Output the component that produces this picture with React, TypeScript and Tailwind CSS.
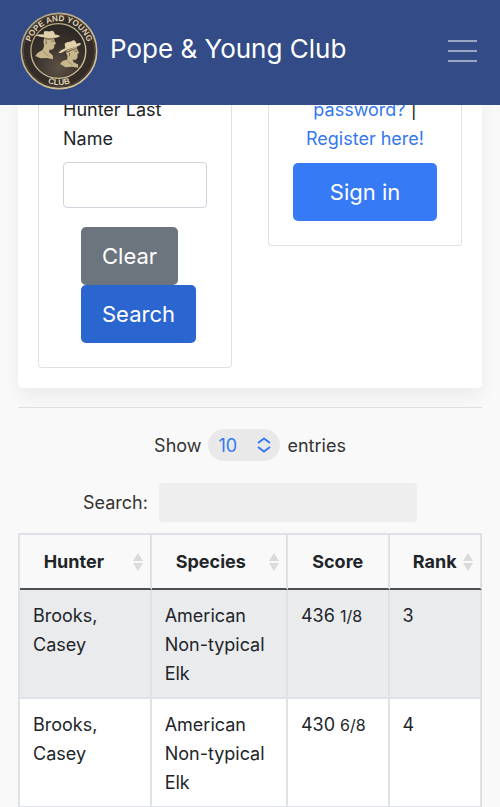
import type { ReactNode } from "react";

const records = [
  { hunter: "Brooks, Casey", species: "American Non-typical Elk", score: 436, fraction: "1/8", rank: 3 },
  { hunter: "Brooks, Casey", species: "American Non-typical Elk", score: 430, fraction: "6/8", rank: 4 },
];

const ClubLogo = () => (
  <svg viewBox="58 35 236 236" className="size-[78px] shrink-0" role="img" aria-label="Pope and Young Club medallion">
    <defs>
      <radialGradient id="field" cx="0.5" cy="0.8" r="0.8">
        <stop offset="0" stopColor="#5e5245" />
        <stop offset="0.5" stopColor="#3b332d" />
        <stop offset="1" stopColor="#2a2523" />
      </radialGradient>
      <linearGradient id="brass" x1="0" y1="0" x2="1" y2="1">
        <stop offset="0" stopColor="#a89b7c" />
        <stop offset="0.5" stopColor="#c9b98f" />
        <stop offset="1" stopColor="#d9c79a" />
      </linearGradient>
      <path id="arc-top" d="M 86 153 A 90 90 0 0 1 266 153" />
      <path id="arc-bottom" d="M 70 150 A 106 106 0 0 0 282 150" />
    </defs>
    <circle cx="176" cy="153" r="114" fill="#332c29" stroke="url(#brass)" strokeWidth="5" />
    <circle cx="176" cy="153" r="108" fill="none" stroke="#57493a" strokeWidth="3" />
    <circle cx="174" cy="153" r="83" fill="url(#field)" stroke="url(#brass)" strokeWidth="4" />
    <g fill="#e0d5b5" fontFamily="Liberation Sans, sans-serif" fontWeight="700" fontSize="25" textAnchor="middle">
      <text>
        <textPath href="#arc-top" startOffset="50%">POPE AND YOUNG</textPath>
      </text>
      <text>
        <textPath href="#arc-bottom" startOffset="50%">CLUB</textPath>
      </text>
    </g>
    {/* left hunter */}
    <path d="M132 110 L161 112 L162 121 L167 131 L162 134 L161 144 L154 149 L147 149 L146 157 L157 166 L158 178 L140 174 L120 175 L104 168 L112 158 L127 149 L131 138 L129 124 Z" fill="#c8b78d" />
    <path d="M105 106 Q116 101 130 103 L130 95 Q134 91 145 94 L157 92 Q162 95 164 103 Q174 103 180 108 Q165 116 142 113 Q120 111 105 106 Z" fill="#e0d1aa" />
    <path d="M131 113 Q145 117 161 114 L161 117 Q145 121 131 117 Z" fill="#7b6a4e" />
    <path d="M137 121 V133 M153 123 H160" fill="none" stroke="#7b6a4e" strokeWidth="3" />
    <path d="M128 154 L145 169" fill="none" stroke="#8a7859" strokeWidth="2" />
    {/* right hunter */}
    <path d="M199 151 L229 140 L232 149 L237 159 L232 162 L232 173 L226 180 L217 179 L220 187 L234 194 L234 204 L215 201 L196 202 L179 192 L187 183 L201 179 L202 168 L198 160 Z" fill="#c8b78d" />
    <path d="M174 158 Q180 150 195 145 L193 131 Q200 124 210 125 L221 120 Q227 123 229 131 Q240 127 243 131 Q238 139 219 143 Q200 147 187 157 Q180 161 174 158 Z" fill="#e0d1aa" />
    <path d="M200 154 Q214 148 229 144 L230 147 Q216 151 201 158 Z" fill="#7b6a4e" />
    <path d="M208 158 V169 M223 154 H231" fill="none" stroke="#7b6a4e" strokeWidth="3" />
    <path d="M201 183 L217 195" fill="none" stroke="#8a7859" strokeWidth="2" />
  </svg>
);

const SortArrows = () => (
  <svg viewBox="0 0 10 18" className="absolute right-[7px] top-1/2 h-[18px] w-[10px] -translate-y-1/2 fill-[#dadada]" aria-hidden="true">
    <path d="M5 0 L10 8 H0 Z M0 10 H10 L5 18 Z" />
  </svg>
);

const HeaderCell = ({ children, className, sortable = true }: { children: ReactNode; className: string; sortable?: boolean }) => (
  <th scope="col" className={`border-b-2 border-r-2 border-b-[#505154] border-r-[#dee2e6] p-0 font-bold ${className}`}>
    <button type="button" className="relative h-[53px] w-full">
      {children}
      {sortable && <SortArrows />}
    </button>
  </th>
);

const cell = "border-b-2 border-r-2 border-[#dee2e6] px-[13px] pb-[9px] pt-[11px] align-top";

export default function App() {
  return (
    <div className="min-h-screen bg-[#f9f9f9] font-[Inter,sans-serif] text-[18px] leading-[29px] text-[#212529]">
      <header className="sticky top-0 z-10 flex h-[105px] items-center justify-between bg-[#334c87] pb-1 pl-5 pr-[23px]">
        <a href="#" className="flex items-center gap-3 text-[26px] text-white">
          <ClubLogo />
          <span className="pb-1">Pope &amp; Young Club</span>
        </a>
        <button type="button" aria-label="Toggle navigation" className="flex flex-col gap-2">
          <span className="h-[2px] w-[29px] bg-white/50" />
          <span className="h-[2px] w-[29px] bg-white/50" />
          <span className="h-[2px] w-[29px] bg-white/50" />
        </button>
      </header>

      {/* the form panel is scrolled partly under the sticky header */}
      <main className="-mt-[10px] px-[18px]">
        <section className="grid grid-cols-2 items-start gap-9 rounded-b-sm bg-white px-5 pb-5 shadow-[0_8px_18px_rgba(0,20,50,0.06)]">
          <form className="rounded-b border border-t-0 border-[#dfe0e3] px-6 pb-6" onSubmit={(e) => e.preventDefault()}>
            <label htmlFor="last-name" className="block">
              Hunter Last Name
            </label>
            <input id="last-name" type="text" className="mt-[9px] block h-[46px] w-full rounded border border-[#ced4da] bg-white px-3" />
            <div className="ml-[18px] mt-[19px] flex flex-col items-start text-[22px] text-white">
              <button type="reset" className="h-[58px] rounded-[5px] bg-[#6c757d] px-[21px]">
                Clear
              </button>
              <button type="submit" className="h-[58px] rounded-[5px] bg-[#2b66d0] px-[21px]">
                Search
              </button>
            </div>
          </form>

          <div className="rounded-b border border-t-0 border-[#dfe0e3] px-6 pb-6 text-center">
            <p>
              <a href="#" className="text-[#3578f0]">
                password?
              </a>{" "}
              |<br />
              <a href="#" className="text-[#3578f0]">
                Register here!
              </a>
            </p>
            <button type="button" className="mt-[10px] h-[58px] w-full rounded-[5px] bg-[#367af6] text-[22px] text-white">
              Sign in
            </button>
          </div>
        </section>

        <hr className="mt-[19px] border-[#dcdfe2]" />

        <div className="mt-[21px] flex items-center justify-center gap-[7px] text-[#333333]">
          <label htmlFor="page-size">Show</label>
          <div className="relative">
            <select id="page-size" className="block h-8 w-[72px] appearance-none rounded-full bg-[#e9e9e9] pl-[10px] text-[#3578f0]">
              <option>10</option>
              <option>25</option>
              <option>50</option>
            </select>
            <svg viewBox="0 0 14 16" className="pointer-events-none absolute right-[9px] top-2 h-4 w-[14px] fill-none stroke-[#3578f0] stroke-2" aria-hidden="true">
              <path d="M1 6 L7 1.5 L13 6 M1 10 L7 14.5 L13 10" />
            </svg>
          </div>
          <label htmlFor="page-size">entries</label>
        </div>

        <div className="mt-[22px] flex items-center justify-center gap-[11px] text-[#333333]">
          <label htmlFor="table-search">Search:</label>
          <input id="table-search" type="search" className="h-[39px] w-[258px] rounded bg-[#eeeeee] px-2" />
        </div>

        <table className="mt-[11px] w-full table-fixed border-separate border-spacing-0 border-l-2 border-t-2 border-[#dee2e6]">
          <thead>
            <tr>
              <HeaderCell className="w-[28.5%] [&>button]:pr-[22px]">Hunter</HeaderCell>
              <HeaderCell className="w-[29.5%] [&>button]:pr-4">Species</HeaderCell>
              <HeaderCell className="w-[22%]" sortable={false}>
                Score
              </HeaderCell>
              <HeaderCell className="w-[20%]">Rank</HeaderCell>
            </tr>
          </thead>
          <tbody>
            {records.map((r) => (
              <tr key={r.rank} className="odd:bg-[#eaebed] even:bg-white">
                <td className={cell}>{r.hunter}</td>
                <td className={cell}>{r.species}</td>
                <td className={cell}>
                  {r.score} <span className="text-[16px]">{r.fraction}</span>
                </td>
                <td className={cell}>{r.rank}</td>
              </tr>
            ))}
          </tbody>
        </table>
      </main>
    </div>
  );
}
